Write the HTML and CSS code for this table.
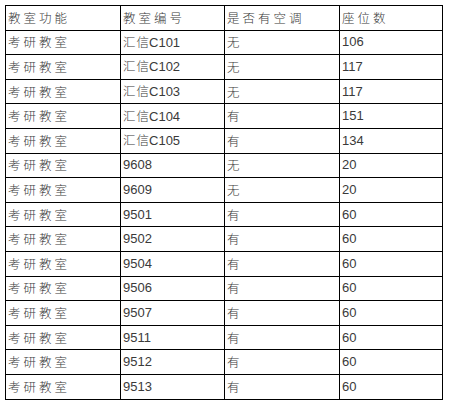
FILE: index.html
```html
<!DOCTYPE html>
<html lang="zh">
<head>
<meta charset="utf-8">
<link rel="stylesheet" href="styles.css">
</head>
<body>
<table class="rooms">
  <colgroup>
    <col class="c1"><col class="c2"><col class="c3"><col class="c4">
  </colgroup>
  <tr><td class="cjk">教室功能</td><td class="cjk">教室编号</td><td class="cjk">是否有空调</td><td class="cjk">座位数</td></tr>
  <tr><td class="cjk">考研教室</td><td><span class="cjk pre">汇信</span>C101</td><td class="cjk">无</td><td>106</td></tr>
  <tr><td class="cjk">考研教室</td><td><span class="cjk pre">汇信</span>C102</td><td class="cjk">无</td><td>117</td></tr>
  <tr><td class="cjk">考研教室</td><td><span class="cjk pre">汇信</span>C103</td><td class="cjk">无</td><td>117</td></tr>
  <tr><td class="cjk">考研教室</td><td><span class="cjk pre">汇信</span>C104</td><td class="cjk">有</td><td>151</td></tr>
  <tr><td class="cjk">考研教室</td><td><span class="cjk pre">汇信</span>C105</td><td class="cjk">有</td><td>134</td></tr>
  <tr><td class="cjk">考研教室</td><td>9608</td><td class="cjk">无</td><td>20</td></tr>
  <tr><td class="cjk">考研教室</td><td>9609</td><td class="cjk">无</td><td>20</td></tr>
  <tr><td class="cjk">考研教室</td><td>9501</td><td class="cjk">有</td><td>60</td></tr>
  <tr><td class="cjk">考研教室</td><td>9502</td><td class="cjk">有</td><td>60</td></tr>
  <tr><td class="cjk">考研教室</td><td>9504</td><td class="cjk">有</td><td>60</td></tr>
  <tr><td class="cjk">考研教室</td><td>9506</td><td class="cjk">有</td><td>60</td></tr>
  <tr><td class="cjk">考研教室</td><td>9507</td><td class="cjk">有</td><td>60</td></tr>
  <tr><td class="cjk">考研教室</td><td>9511</td><td class="cjk">有</td><td>60</td></tr>
  <tr><td class="cjk">考研教室</td><td>9512</td><td class="cjk">有</td><td>60</td></tr>
  <tr><td class="cjk">考研教室</td><td>9513</td><td class="cjk">有</td><td>60</td></tr>
</table>
</body>
</html>
```

FILE: styles.css
```css
html, body {
  margin: 0;
  padding: 0;
  background: #fff;
}
body {
  padding: 5px 0 0 5px;
  font-family: "Liberation Sans", "Noto Sans CJK SC", sans-serif;
  font-size: 13px;
  color: #3a3a3a;
}
.rooms {
  border-collapse: collapse;
  table-layout: fixed;
  width: 437px;
}
.c1 { width: 115px; }
.c2 { width: 104px; }
.c3 { width: 115px; }
.c4 { width: 103px; }
.rooms td {
  border: 1px solid #000;
  height: 23.6px;
  padding: 0 0 0 2px;
  line-height: 16px;
  vertical-align: middle;
  white-space: nowrap;
  overflow: hidden;
}
.cjk {
  font-family: "Noto Sans CJK SC", sans-serif;
  font-size: 12.5px;
  letter-spacing: 3px;
  font-weight: 300;
}
.pre {
  letter-spacing: 1px;
  margin-right: -1px;
}
```
